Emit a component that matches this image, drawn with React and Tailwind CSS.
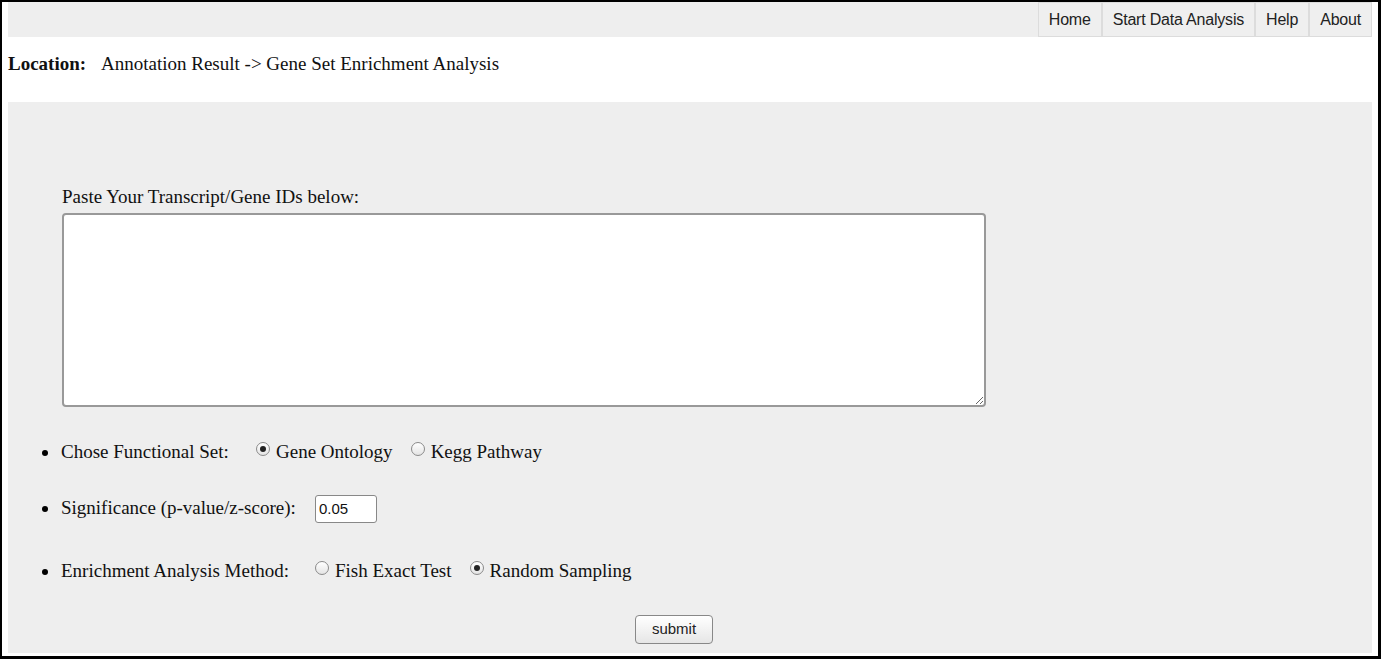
const serif = { fontFamily: "'Liberation Serif', 'Times New Roman', serif" };
const sans = { fontFamily: "'Liberation Sans', Arial, sans-serif" };

const navItems = ['Home', 'Start Data Analysis', 'Help', 'About'];

function Radio({ checked }) {
  return (
    <span className="inline-flex w-[14px] h-[14px] rounded-full border border-[#8a8a8a] bg-gradient-to-b from-white to-[#e4e4e4] items-center justify-center mr-[6px] relative top-[-4px] shrink-0">
      {checked && <span className="w-[6px] h-[6px] rounded-full bg-[#222]" />}
    </span>
  );
}

export default function App() {
  return (
    <div className="w-[1381px] h-[659px] bg-white border-black border-t-[2px] border-l-[2px] border-r-[3px] border-b-[3px] overflow-hidden" style={serif}>

      {/* TOP BAR */}
      <div className="ml-[6px] mr-[6px] h-[35px] bg-[#eeeeee] flex justify-end">
        {navItems.map(n => (
          <div key={n} style={sans}
            className="h-[35px] px-[10px] flex items-center text-[16px] text-[#222] border border-[#dcdcdc] bg-[#efefef] tracking-[-0.2px]">
            {n}
          </div>
        ))}
      </div>

      {/* LOCATION */}
      <div className="h-[65px] pl-[6px] pt-[13px] text-[19px] text-[#111] flex">
        <span className="font-bold w-[93px]">Location:</span>
        <span>Annotation Result -&gt; Gene Set Enrichment Analysis</span>
      </div>

      {/* FORM PANEL */}
      <div className="ml-[6px] mr-[6px] h-[551px] bg-[#eeeeee] pt-[81px] text-[19px] text-[#111]">
        <div className="pl-[54px]">
          <p className="mb-[1px]">Paste Your Transcript/Gene IDs below:</p>
          <textarea className="w-[924px] h-[194px] bg-white border-[2px] border-[#999] rounded-[4px] block" />
        </div>

        <ul className="mt-[31px] pl-[34px]">
          <li className="flex items-center h-[30px]">
            <span className="w-[6px] h-[6px] rounded-full bg-black mr-[13px]" />
            <span className="w-[195px]">Chose Functional Set:</span>
            <Radio checked />
            <span className="mr-[18px]">Gene Ontology</span>
            <Radio />
            <span>Kegg Pathway</span>
          </li>
          <li className="flex items-center h-[30px] mt-[26px]">
            <span className="w-[6px] h-[6px] rounded-full bg-black mr-[13px]" />
            <span className="w-[254px]">Significance (p-value/z-score):</span>
            <input defaultValue="0.05" style={sans}
              className="w-[62px] h-[28px] bg-white border border-[#888] rounded-[3px] px-[3px] text-[15px] text-[#111]" />
          </li>
          <li className="flex items-center h-[30px] mt-[33px]">
            <span className="w-[6px] h-[6px] rounded-full bg-black mr-[13px]" />
            <span className="w-[254px]">Enrichment Analysis Method:</span>
            <Radio />
            <span className="mr-[18px]">Fish Exact Test</span>
            <Radio checked />
            <span>Random Sampling</span>
          </li>
        </ul>

        <div className="flex justify-center mt-[28px] pr-[32px]">
          <button style={sans}
            className="w-[78px] h-[29px] border border-[#888] rounded-[4px] bg-gradient-to-b from-white to-[#e6e6e6] text-[15px] text-[#222]">
            submit
          </button>
        </div>
      </div>
    </div>
  );
}
